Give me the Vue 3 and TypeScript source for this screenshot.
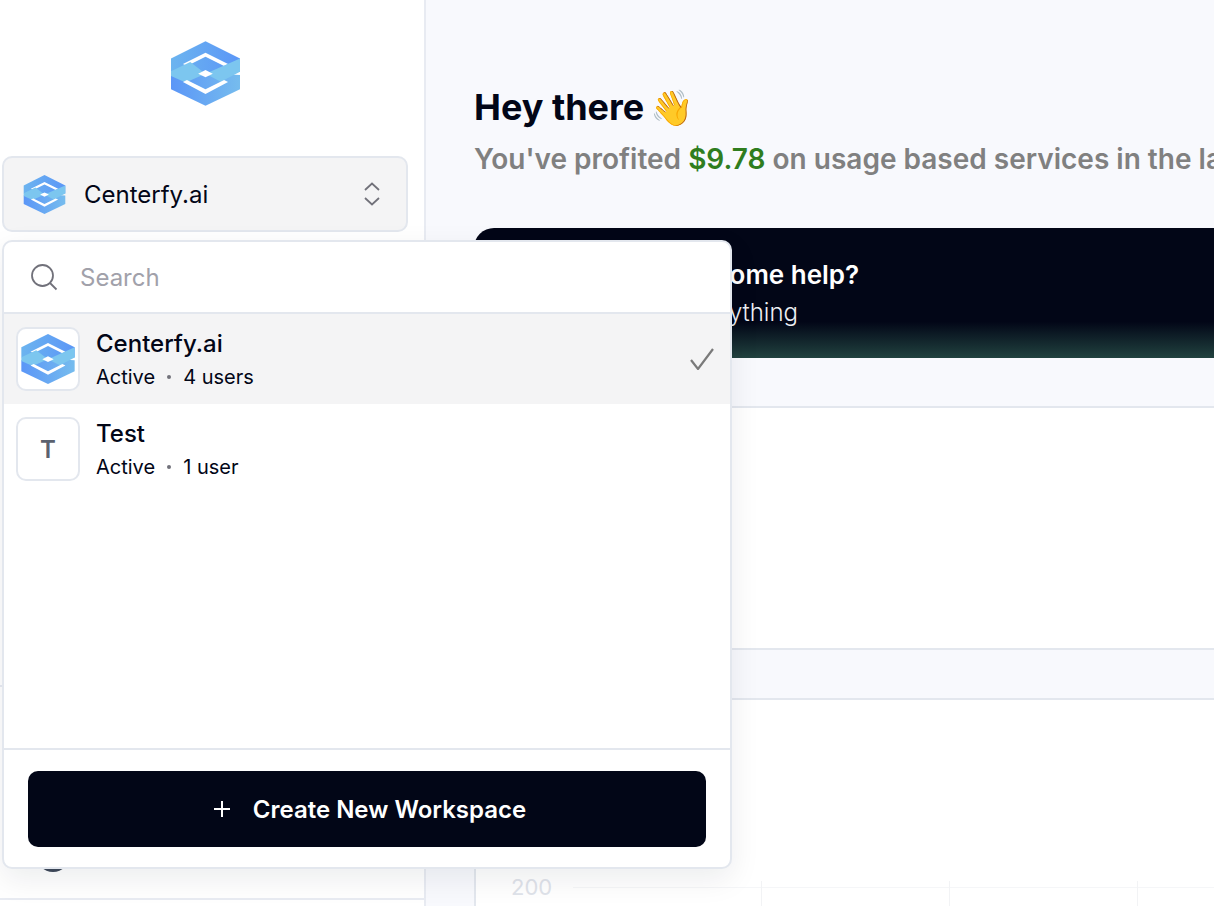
<script setup lang="ts">
import { ref } from 'vue';

type Workspace = { id: string; name: string; meta: string; letter?: string };

const workspaces = ref<Workspace[]>([
  { id: 'centerfy', name: 'Centerfy.ai', meta: '4 users' },
  { id: 'test', name: 'Test', meta: '1 user', letter: 'T' },
]);
const selected = ref('centerfy');
</script>

<template>
  <div class="page">
    <svg class="defs" width="0" height="0">
      <defs>
        <linearGradient id="blueA" x1="0" y1="0" x2="1" y2="0">
          <stop offset="0" stop-color="#6cb4ef" />
          <stop offset="1" stop-color="#5b96f7" />
        </linearGradient>
        <linearGradient id="blueB" x1="0" y1="0" x2="1" y2="0">
          <stop offset="0" stop-color="#5b96f7" />
          <stop offset="1" stop-color="#76bcee" />
        </linearGradient>
        <g id="mark">
          <path fill="url(#blueA)" d="M164 33L268 85V125L164 130L60 125V85Z" />
          <path fill="url(#blueB)" d="M60 135L164 130L268 135V178L164 228L60 178Z" />
          <path fill="#fff" d="M164 68L232 102L220 108L164 80L108 108L96 102Z" />
          <path fill="#7cc6ef" d="M268 85V125L210 155L164 131ZM60 124L118 96L164 131L104 158L60 138Z" />
          <path fill="#fff" d="M96 156L108 150L164 178L220 150L232 156L164 192Z" />
          <path fill="#fff" d="M164 120L186 131L164 142L142 131Z" />
        </g>
      </defs>
    </svg>

    <aside class="sidebar">
      <div class="logo-row">
        <svg class="logo" viewBox="60 33 208 195"><use href="#mark" /></svg>
      </div>
      <button class="switcher">
        <svg class="switcher-logo" viewBox="60 33 208 195"><use href="#mark" /></svg>
        <span class="switcher-name">Centerfy.ai</span>
        <svg class="updown" viewBox="0 0 16 24" fill="none" stroke="#71717a" stroke-width="1.8">
          <path d="M1 8L8 1.5L15 8M1 16L8 22.5L15 16" />
        </svg>
      </button>
      <div class="side-spacer"></div>
      <div class="side-footer">
        <div class="avatar"></div>
      </div>
      <div class="side-end"></div>
    </aside>

    <main class="main">
      <h1 class="title">Hey there <span class="wave">👋</span></h1>
      <p class="sub">You've profited <b>$9.78</b> on usage based services in the last 30 days</p>
      <section class="banner">
        <div class="banner-title">Need some help?</div>
        <div class="banner-text">Ask anything</div>
      </section>
      <section class="card card-short"></section>
      <section class="card card-chart">
        <div class="chart-row">
          <span class="tick">200</span>
          <div class="grid-line"><i></i><i></i><i></i></div>
        </div>
      </section>
    </main>

    <div class="dropdown">
      <div class="search">
        <svg class="search-icon" viewBox="0 0 28 28" fill="none" stroke="#71717a" stroke-width="1.8">
          <circle cx="12.5" cy="12.5" r="10.5" />
          <path d="M20 20l6.5 6.5" />
        </svg>
        <span class="search-text">Search</span>
      </div>
      <ul class="list">
        <li v-for="w in workspaces" :key="w.id" class="item" :class="{ active: w.id === selected }">
          <div class="thumb">
            <span v-if="w.letter">{{ w.letter }}</span>
            <svg v-else class="thumb-logo" viewBox="60 33 208 195"><use href="#mark" /></svg>
          </div>
          <div class="item-text">
            <div class="item-name">{{ w.name }}</div>
            <div class="item-meta">Active<i class="dot"></i>{{ w.meta }}</div>
          </div>
          <svg v-if="w.id === selected" class="check" viewBox="0 0 24 22" fill="none" stroke="#7a7a7a" stroke-width="2.2">
            <path d="M1 12l7 9L23 1" />
          </svg>
        </li>
      </ul>
      <div class="dd-footer">
        <button class="create">
          <svg class="plus" viewBox="0 0 18 18" stroke="#fff" stroke-width="2"><path d="M9 1v16M1 9h16" /></svg>
          Create New Workspace
        </button>
      </div>
    </div>
  </div>
</template>

<style>
html,
body {
  margin: 0;
  height: 100%;
  overflow: hidden;
  background: #f8f9fd;
}
</style>

<style scoped>
.page {
  position: relative;
  display: flex;
  width: 1214px;
  height: 906px;
  overflow: hidden;
  font-family: Inter, "Liberation Sans", sans-serif;
  color: #020617;
}

.defs {
  position: absolute;
}

.sidebar {
  width: 426px;
  flex-shrink: 0;
  display: flex;
  flex-direction: column;
  box-sizing: border-box;
  background: #fff;
  border-right: 2px solid #e8ebf2;
}

.logo-row {
  display: flex;
  justify-content: center;
  width: 410px;
  height: 156px;
  padding-top: 41px;
  box-sizing: border-box;
}

.logo {
  width: 69px;
  height: 65px;
}

.switcher {
  display: flex;
  align-items: center;
  flex-shrink: 0;
  width: 406px;
  height: 76px;
  margin-left: 2px;
  padding: 0 26px 0 19px;
  box-sizing: border-box;
  background: #f4f4f5;
  border: 2px solid #e3e7ee;
  border-radius: 10px;
  font: inherit;
  color: inherit;
}

.switcher-logo {
  width: 43px;
  height: 39px;
}

.switcher-name {
  margin-left: 18px;
  font-size: 24px;
  flex: 1;
  text-align: left;
}

.updown {
  width: 16px;
  height: 24px;
}

.side-spacer {
  flex: 1;
}

.side-footer {
  height: 215px;
  border-top: 2px solid #e8ebf2;
  border-bottom: 2px solid #e8ebf2;
  box-sizing: border-box;
  position: relative;
}

.avatar {
  position: absolute;
  left: 36px;
  top: 151px;
  width: 34px;
  height: 34px;
  border-radius: 50%;
  background: #3f4a5a;
}

.side-end {
  height: 6px;
}

.main {
  flex: 1;
  min-width: 0;
  padding: 87px 0 0 48px;
  box-sizing: border-box;
  white-space: nowrap;
  overflow: hidden;
}

.title {
  height: 40px;
  margin: 0;
  font-size: 36px;
  line-height: 40px;
  font-weight: 700;
}

.wave {
  margin-left: -3px;
  font-size: 35px;
  line-height: 1;
}

.sub {
  height: 34px;
  margin: 15px 0 0;
  font-size: 28px;
  line-height: 34px;
  font-weight: 600;
  color: #808080;
}

.sub b {
  font-weight: 600;
  color: #2f7d1e;
}

.banner {
  height: 130px;
  margin: 52px 0 0;
  padding: 30px 0 0 168px;
  box-sizing: border-box;
  border-radius: 20px 0 0 20px;
  background: linear-gradient(180deg, #020617 0, #020617 72%, #21423f 100%);
  color: #fff;
}

.banner-title {
  font-size: 26px;
  line-height: 34px;
  font-weight: 600;
}

.banner-text {
  margin: 5px 0 0 12px;
  font-size: 24px;
  line-height: 32px;
  font-weight: 300;
  color: #eef0f4;
}

.card {
  margin-top: 48px;
  background: #fff;
  border: 2px solid #e3e7ee;
  border-right: 0;
  box-sizing: border-box;
}

.card-short {
  height: 244px;
}

.card-chart {
  height: 240px;
  position: relative;
}

.chart-row {
  position: absolute;
  left: 35px;
  right: 0;
  top: 174px;
  display: flex;
  align-items: center;
}

.tick {
  font-size: 22px;
  color: #dfe3ea;
}

.grid-line {
  position: relative;
  flex: 1;
  height: 1px;
  margin-left: 21px;
  background: #f5f6f8;
}

.grid-line i {
  position: absolute;
  top: -6px;
  width: 1px;
  height: 30px;
  background: #f2f3f5;
}

.grid-line i:nth-child(1) { left: 188px; }
.grid-line i:nth-child(2) { left: 376px; }
.grid-line i:nth-child(3) { left: 564px; }

.dropdown {
  position: absolute;
  left: 2px;
  top: 240px;
  width: 730px;
  height: 629px;
  display: flex;
  flex-direction: column;
  box-sizing: border-box;
  background: #fff;
  border: 2px solid #e3e7ee;
  border-radius: 10px;
  box-shadow: 0 10px 30px rgba(15, 23, 42, 0.08);
}

.search {
  display: flex;
  align-items: center;
  height: 72px;
  flex-shrink: 0;
  box-sizing: border-box;
  padding-left: 26px;
  border-bottom: 2px solid #e3e7ee;
}

.search-icon {
  width: 28px;
  height: 28px;
}

.search-text {
  margin-left: 22px;
  font-size: 24px;
  color: #a1a1aa;
}

.list {
  flex: 1;
  margin: 0;
  padding: 0;
  list-style: none;
}

.item {
  display: flex;
  align-items: center;
  height: 90px;
  padding: 0 16px 0 12px;
}

.item.active {
  background: #f4f4f5;
}

.thumb {
  display: flex;
  align-items: center;
  justify-content: center;
  width: 64px;
  height: 64px;
  flex-shrink: 0;
  box-sizing: border-box;
  background: #fff;
  border: 2px solid #e3e7ee;
  border-radius: 10px;
  font-size: 24px;
  font-weight: 600;
  color: #5b616e;
}

.thumb-logo {
  width: 54px;
  height: 50px;
}

.item-text {
  flex: 1;
  margin: 2px 0 0 16px;
}

.item-name {
  font-size: 24px;
  line-height: 30px;
  font-weight: 500;
}

.item-meta {
  display: flex;
  align-items: center;
  margin-top: 4px;
  font-size: 20px;
  line-height: 28px;
}

.dot {
  width: 4px;
  height: 4px;
  margin: 0 12px;
  border-radius: 50%;
  background: #71717a;
}

.check {
  width: 24px;
  height: 22px;
}

.dd-footer {
  flex-shrink: 0;
  padding: 21px 24px 20px;
  border-top: 2px solid #e3e7ee;
}

.create {
  display: flex;
  align-items: center;
  justify-content: center;
  width: 100%;
  height: 76px;
  padding: 0 0 0 5px;
  border: 0;
  border-radius: 10px;
  background: #020617;
  color: #fff;
  font: inherit;
  font-size: 24px;
  font-weight: 600;
}

.plus {
  width: 18px;
  height: 18px;
  margin-right: 22px;
}
</style>
